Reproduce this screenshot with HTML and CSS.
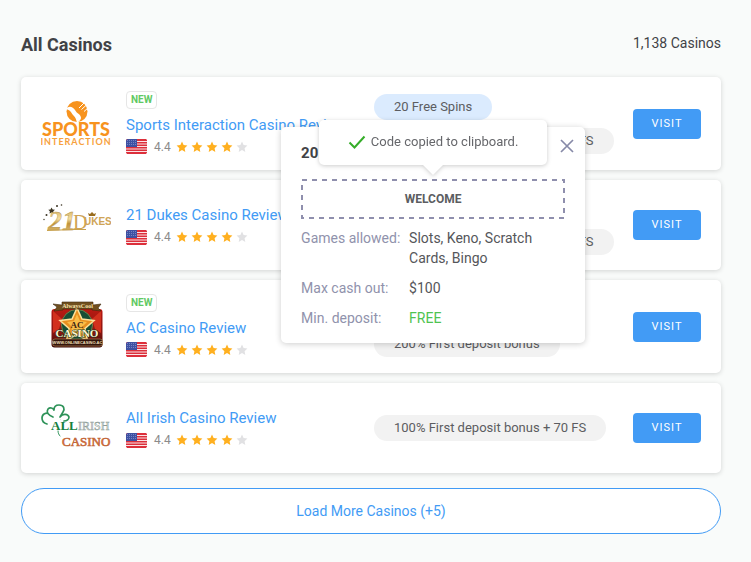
FILE: index.html
```html
<!DOCTYPE html>
<html lang="en">
<head>
<meta charset="utf-8">
<meta name="viewport" content="width=device-width, initial-scale=1">
<title>All Casinos</title>
<link rel="stylesheet" href="styles.css">
</head>
<body>
<svg width="0" height="0" class="sprite" aria-hidden="true">
  <symbol id="star" viewBox="0 0 12 12"><path d="M6 .6 7.6 4.1l3.800.5-2.800 2.600.7 3.800L6 9.1 2.700 11l.7-3.800L.6 4.600l3.800-.5z"/></symbol>
  <symbol id="stars" viewBox="0 0 72 12">
    <g fill="#ffb020"><use href="#star" width="12" height="12"/><use href="#star" x="15" width="12" height="12"/><use href="#star" x="30" width="12" height="12"/><use href="#star" x="45" width="12" height="12"/></g>
    <use href="#star" x="60" width="12" height="12" fill="#e1e1e3"/>
  </symbol>
  <symbol id="flag" viewBox="0 0 21 15">
    <rect width="21" height="15" rx="2" fill="#fbe3e5"/>
    <path d="M1 0h19l1 1v1H0V1zM0 3h21v1.500H0zM0 5.500h21V7H0zM0 8h21v1.500H0zM0 10.500h21V12H0zM0 13h21v.5L20 15H1l-1-1.500z" fill="#dc2f3b"/>
    <path d="M2 0h9v8H0V2Q0 0 2 0z" fill="#3e51a3"/>
    <path d="M1 1.500h9.500M1 3.500h9.500M1 5.500h9.500" stroke="#8e9bd0" stroke-width=".7" stroke-dasharray="1 1"/>
  </symbol>
</svg>

<main class="page">
  <header class="head">
    <h1>All Casinos</h1>
    <p>1,138 Casinos</p>
  </header>

  <section class="list">
    <article class="card is-new">
      <svg class="logo" viewBox="0 0 70 60" role="img" aria-label="Sports Interaction">
        <circle cx="36" cy="17.500" r="10.500" fill="#f7931e"/>
        <path d="M25 15c3-4 7-2 9 1 2 4 6 4 6 8 0 2-2 3-4 5-1-5-2-6-4-8-2-3-3-5-7-6z" fill="#fff"/>
        <path d="M38 14l5-5M40.500 15.500l5.500-5M43 17.500l4.500-4" stroke="#fff" stroke-width="1"/>
        <text class="sports" x="35" y="42" text-anchor="middle">SPORTS</text>
        <text class="interaction" x="35" y="51" text-anchor="middle">INTERACTION</text>
      </svg>
      <div class="info">
        <span class="new">NEW</span>
        <a class="name" href="#sports">Sports Interaction Casino Review</a>
        <div class="rating"><svg class="flag" role="img" aria-label="United States"><use href="#flag"/></svg><span>4.4</span><svg class="stars" aria-hidden="true"><use href="#stars"/></svg></div>
      </div>
      <div class="bonuses">
        <div class="anchor">
          <button class="pill active" type="button">20 Free Spins</button>
          <div class="popup" role="dialog" aria-label="20 Free Spins">
            <div class="popup-head">
              <h2>20 Free Spins</h2>
              <button class="close" type="button" aria-label="Close"><svg viewBox="0 0 14 14"><path d="M1 1l12 12M13 1l-12 12"/></svg></button>
            </div>
            <button class="code" type="button"><svg class="dash" aria-hidden="true"><rect x="1" y="1" width="100%" height="100%"/></svg>WELCOME</button>
            <dl class="terms">
              <dt>Games allowed:</dt><dd>Slots, Keno, Scratch Cards, Bingo</dd>
              <dt>Max cash out:</dt><dd>$100</dd>
              <dt>Min. deposit:</dt><dd class="free">FREE</dd>
            </dl>
            <div class="toast" role="status"><svg viewBox="0 0 18 14" aria-hidden="true"><path d="M1.500 7.500l5 5L16.500 1.500"/></svg>Code copied to clipboard.</div>
          </div>
        </div>
        <button class="pill" type="button">100% First deposit bonus + 100 FS</button>
      </div>
      <button class="visit" type="button">VISIT</button>
    </article>

    <article class="card">
      <svg class="logo" viewBox="0 0 70 60" role="img" aria-label="21 Dukes">
        <defs><linearGradient id="gold" x2="0" y2="1"><stop stop-color="#c79b42"/><stop offset=".45" stop-color="#f5dfa0"/><stop offset=".6" stop-color="#c0923a"/><stop offset="1" stop-color="#ecd08c"/></linearGradient></defs>
        <g fill="#3b3423"><path d="M10.500 12.500l1.200 2 2.300.3-1.700 1.500.4 2.200-2.200-1-2 1 .4-2.200L7.300 14.800l2.200-.3z"/><circle cx="16" cy="11" r="1"/><circle cx="20.500" cy="10" r=".8"/><circle cx="5.500" cy="20" r="1"/><circle cx="3" cy="24.500" r=".7"/></g>
        <text class="twentyone" x="7" y="35">21</text>
        <text class="dukes" x="32" y="34"><tspan class="dukes-d">D</tspan><tspan class="dukes-rest" x="43" y="30">UKES</tspan></text>
        <path d="M6 35.500l27-1M33 34.500h12" stroke="#c9a24c"/>
        <path d="M48 21l-1-3 2 1 2-2 2 2 2-1-1 3z" fill="#9a6d20"/>
      </svg>
      <div class="info">
        <a class="name" href="#dukes">21 Dukes Casino Review</a>
        <div class="rating"><svg class="flag" role="img" aria-label="United States"><use href="#flag"/></svg><span>4.4</span><svg class="stars" aria-hidden="true"><use href="#stars"/></svg></div>
      </div>
      <div class="bonuses">
        <button class="pill" type="button">20 Free Spins</button>
        <button class="pill" type="button">100% First deposit bonus + 100 FS</button>
      </div>
      <button class="visit" type="button">VISIT</button>
    </article>

    <article class="card is-new">
      <svg class="logo" viewBox="0 0 70 60" role="img" aria-label="AC Casino">
        <defs><linearGradient id="felt" x2="0" y2="1"><stop stop-color="#b91a12"/><stop offset=".6" stop-color="#8b1510"/><stop offset="1" stop-color="#3a0a06"/></linearGradient></defs>
        <rect x="10.500" y="12" width="51" height="38.500" rx="3" fill="url(#felt)"/>
        <path d="M12 14l9 8-3 10-6 4zM60 14l-9 8 3 10 6 4z" fill="#d2301d"/>
        <circle cx="36" cy="28" r="15.500" fill="#174e35" stroke="#69834a"/>
        <path d="M36 11l5 11 12 1.500-9 8 2.500 12L36 37.500 25.500 43.500l2.500-12-9-8L31 22z" fill="#e8901f" stroke="#ffe29a" stroke-width="1.500"/>
        <path d="M36 17l3 7 7 1-5 5 1 7-6-4-6 4 1-7-5-5 7-1z" fill="#f9bd48"/>
        <path d="M12 7l9 1V5h31v3l8-1-3 4 3 3-9-1v-1H22v1l-9 1 3-4z" fill="#71501f" stroke="#3e290d" stroke-width=".6"/>
        <text class="always" x="36.500" y="10.500" text-anchor="middle">AlwaysCool</text>
        <text class="ac" x="36" y="31" text-anchor="middle">AC</text>
        <text class="ac-casino" x="36" y="40" text-anchor="middle">CASINO</text>
        <rect x="11.500" y="42" width="50" height="7" rx="2.500" fill="#32130b" stroke="#aa8151" stroke-width=".7"/>
        <text class="ac-url" x="36.500" y="47" text-anchor="middle">WWW.ONLINECASINO.AC</text>
      </svg>
      <div class="info">
        <span class="new">NEW</span>
        <a class="name" href="#ac">AC Casino Review</a>
        <div class="rating"><svg class="flag" role="img" aria-label="United States"><use href="#flag"/></svg><span>4.4</span><svg class="stars" aria-hidden="true"><use href="#stars"/></svg></div>
      </div>
      <div class="bonuses">
        <button class="pill" type="button">20 Free Spins</button>
        <button class="pill" type="button">200% First deposit bonus</button>
      </div>
      <button class="visit" type="button">VISIT</button>
    </article>

    <article class="card">
      <svg class="logo" viewBox="0 0 70 60" role="img" aria-label="All Irish Casino">
        <g fill="#fff" stroke="#2d9258" stroke-width="1.700" stroke-linecap="round" stroke-linejoin="round">
          <path d="M6 26c-4-1-5-4-5-6 0-4 4-6 8-4-1-2 1-4 3-4 3 1 6 6 8 9"/>
          <path d="M12 19c-5-2-7-5-5-8 2-2 5-1 6 1 0-3 2-5 5-5 5 0 6 4 4 7l-3 5c3-4 8-3 9 0 0 2-2 4-5 4"/>
          <path d="M17 33c0 2 1 4 2 5" stroke-width="1"/>
        </g>
        <text class="all" x="10" y="32">ALL</text>
        <text class="irish" x="37" y="32">IRISH</text>
        <text class="irish-casino" x="21" y="48">CASINO</text>
      </svg>
      <div class="info">
        <a class="name" href="#irish">All Irish Casino Review</a>
        <div class="rating"><svg class="flag" role="img" aria-label="United States"><use href="#flag"/></svg><span>4.4</span><svg class="stars" aria-hidden="true"><use href="#stars"/></svg></div>
      </div>
      <div class="bonuses">
        <button class="pill" type="button">100% First deposit bonus + 70 FS</button>
      </div>
      <button class="visit" type="button">VISIT</button>
    </article>
  </section>

  <button class="more" type="button">Load More Casinos (+5)</button>
</main>
</body>
</html>
```

FILE: styles.css
```css
* { box-sizing: border-box; margin: 0; padding: 0; }
body { background: #f9fbfa; color: #414246; font: 14px/20px Roboto, "Liberation Sans", sans-serif; }
button { font: inherit; color: inherit; border: 0; background: none; cursor: pointer; }
.sprite { position: absolute; }

.page { padding: 32px 30px 28px 21px; }
.head { display: flex; justify-content: space-between; align-items: flex-start; height: 45px; }
h1 { font-size: 18px; line-height: 26px; font-weight: 700; }
.head p { line-height: 22px; }

.list { display: flex; flex-direction: column; gap: 10px; }
.card {
  display: grid;
  grid-template-columns: 70px 233px minmax(0, 1fr) 68px;
  column-gap: 15px;
  align-items: center;
  min-height: 90px;
  padding: 0 20px;
  background: #fff;
  border-radius: 5px;
  box-shadow: 0 1px 5px rgba(0, 0, 0, .16);
}
.card.is-new { min-height: 93px; }
.logo { width: 70px; height: 60px; display: block; }

.info { display: flex; flex-direction: column; align-items: flex-start; padding-top: 2px; white-space: nowrap; }
.is-new .info { padding-top: 0; }
.new {
  padding: 0 4px;
  border: 1px solid #e6e6e6;
  border-radius: 4px;
  color: #61c964;
  font-size: 10px;
  line-height: 16px;
  font-weight: 700;
  margin-bottom: 6px;
}
.name { color: #429bf5; font-size: 15px; line-height: 20px; text-decoration: none; }
.rating { display: flex; align-items: center; height: 20px; margin-top: 2px; color: #8b8b8b; font-size: 12px; }
.flag { width: 21px; height: 15px; margin-right: 7px; }
.stars { width: 72px; height: 12px; margin-left: 5px; }

.bonuses { display: flex; flex-direction: column; align-items: flex-start; gap: 8px; }
.pill {
  display: block;
  height: 26px;
  padding: 0 20px;
  border-radius: 13px;
  background: #f2f2f2;
  color: #5c5d61;
  font-size: 13px;
  white-space: nowrap;
}
.pill.active { background: #dbebfe; }
.visit {
  height: 30px;
  border-radius: 4px;
  background: #429bf5;
  color: #fff;
  font-size: 11px;
  letter-spacing: 1px;
}
.more {
  display: block;
  width: 100%;
  height: 46px;
  margin-top: 15px;
  border: 1px solid #429bf5;
  border-radius: 23px;
  background: #fff;
  color: #429bf5;
}

.anchor { position: relative; }
.popup {
  position: absolute;
  z-index: 2;
  top: calc(100% + 7px);
  left: 50%;
  transform: translateX(-50%);
  width: 304px;
  padding: 16px 20px 15px;
  background: #fff;
  border-radius: 5px;
  box-shadow: 0 1px 6px rgba(0, 0, 0, .2);
}
.popup-head { display: flex; justify-content: space-between; height: 36px; }
h2 { font-size: 15px; line-height: 20px; font-weight: 700; }
.close { width: 14px; height: 14px; margin: -4px -9px 0 0; }
.close svg { display: block; fill: none; stroke: #878aa8; stroke-width: 1.7; }
.code { position: relative; display: block; width: 100%; height: 40px; color: #5c5d61; font-size: 12px; font-weight: 700; }
.dash { position: absolute; left: 0; top: 0; width: 100%; height: 100%; }
.dash rect {
  width: calc(100% - 2px);
  height: calc(100% - 2px);
  fill: none;
  stroke: #8f8fad;
  stroke-width: 2;
  stroke-dasharray: 5 5;
}
.terms { display: grid; grid-template-columns: 98px 1fr; gap: 10px; margin-top: 9px; }
.terms dt { color: #9092ac; white-space: nowrap; }
.terms dd { color: #55565a; }
.terms .free { color: #4fc351; }
.toast {
  position: absolute;
  top: -7px;
  left: 50%;
  transform: translateX(-50%);
  display: flex;
  align-items: center;
  justify-content: center;
  gap: 5px;
  width: 228px;
  height: 45px;
  border-radius: 5px;
  background: #fff;
  color: #66676b;
  font-size: 13px;
  white-space: nowrap;
  filter: drop-shadow(0 1px 2px rgba(0, 0, 0, .2));
}
.toast::after {
  content: "";
  position: absolute;
  top: 100%;
  left: 50%;
  margin-left: -10px;
  border: 10px solid transparent;
  border-top-color: #fff;
  border-bottom: 0;
}
.toast svg { width: 18px; height: 14px; fill: none; stroke: #35ad29; stroke-width: 2; }

.sports { font: 900 18px Lato, sans-serif; fill: #f7931e; }
.interaction { font: 700 9px Lato, sans-serif; letter-spacing: 1px; fill: #f7a13d; }
.twentyone { font: italic 700 28px "Liberation Serif", serif; fill: url(#gold); stroke: #b5944f; stroke-width: .4px; }
.dukes { font: 700 20px "Liberation Serif", serif; fill: #cfa456; }
.dukes-d { font-size: 20px; font-weight: 400; }
.dukes-rest { font: 700 10px "Liberation Sans", sans-serif; }
.always { font: 700 6px "Liberation Serif", serif; fill: #f5e2ae; }
.ac { font: 700 9px "Liberation Serif", serif; fill: #3f2410; }
.ac-casino { font: 700 11px "Liberation Serif", serif; fill: #fff4d2; stroke: #174024; stroke-width: 1px; paint-order: stroke; }
.ac-url { font: 700 4px "Liberation Sans", sans-serif; fill: #f1e0bd; }
.all { font: 700 13px "Liberation Serif", serif; fill: #16803f; }
.irish { font: 12px "Liberation Serif", serif; fill: #fff; stroke: #8d9d97; stroke-width: .6px; }
.irish-casino { font: 13px "Liberation Serif", serif; fill: #e06a32; stroke: #c0683c; stroke-width: .6px; }
```
